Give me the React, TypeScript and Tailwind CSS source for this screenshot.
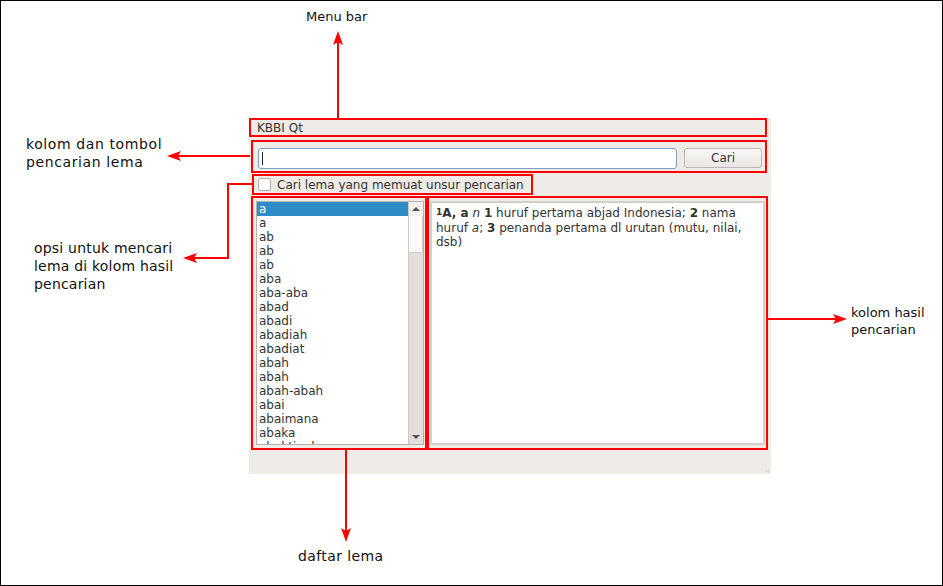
import React from "react"

const lemas = [
  "a",
  "a",
  "ab",
  "ab",
  "ab",
  "aba",
  "aba-aba",
  "abad",
  "abadi",
  "abadiah",
  "abadiat",
  "abah",
  "abah",
  "abah-abah",
  "abai",
  "abaimana",
  "abaka",
  "abaktinal",
]

const font = { fontFamily: '"DejaVu Sans", "Noto Sans", sans-serif' }

function Arrows() {
  return (
    <svg className="absolute inset-0 pointer-events-none" width="943" height="586">
      <g stroke="#ff0000" strokeWidth="2" fill="none">
        <line x1="337" y1="117" x2="337" y2="40" />
        <line x1="249" y1="155" x2="176" y2="155" />
        <polyline points="251,183 227,183 227,257 192,257" />
        <line x1="767" y1="318" x2="836" y2="318" />
        <line x1="345" y1="449" x2="345" y2="530" />
      </g>
      <g fill="#ff0000">
        <polygon points="337,30 332,44 337,41 342,44" />
        <polygon points="166,155 180,150 177,155 180,160" />
        <polygon points="182,257 196,252 193,257 196,262" />
        <polygon points="846,318 832,313 835,318 832,323" />
        <polygon points="345,541 340,527 345,530 350,527" />
      </g>
    </svg>
  )
}

function LemaList() {
  return (
    <div className="ml-[3px] mt-[3px] w-[168px] h-[244px] border border-[#b4b0ac] bg-white flex overflow-hidden">
      <div className="flex-1 flex flex-col overflow-hidden text-[12px] leading-[14px] text-[#333]">
        {lemas.map((l, i) => (
          <div
            key={i}
            className={i === 0 ? "pl-[2px] h-[14px] shrink-0 bg-[#308cc6] text-white" : "pl-[2px] h-[14px] shrink-0"}
          >
            {l}
          </div>
        ))}
      </div>
      <div className="w-[15px] bg-[#e2dedb] border-l border-[#cdc9c5] flex flex-col">
        <div className="h-[14px] flex items-center justify-center bg-[#f2f0ee]">
          <div className="w-0 h-0 border-l-[4px] border-r-[4px] border-b-[4px] border-l-transparent border-r-transparent border-b-[#555]" />
        </div>
        <div className="h-[37px] bg-[#fbfaf9] border-b border-r border-[#d0ccc8]" />
        <div className="flex-1" />
        <div className="h-[14px] flex items-center justify-center">
          <div className="w-0 h-0 border-l-[4px] border-r-[4px] border-t-[4px] border-l-transparent border-r-transparent border-t-[#555]" />
        </div>
      </div>
    </div>
  )
}

function KbbiWindow() {
  return (
    <div
      className="absolute left-[248px] top-[117px] w-[522px] h-[356px] bg-[#efebe7] flex flex-col text-[#333]"
      style={font}
    >
      {/* menu bar */}
      <div className="w-[518px] h-[19px] border-2 border-[#ff0000] flex items-center pl-[6px] text-[12px]">
        KBBI Qt
      </div>

      {/* search */}
      <div className="mt-[3px] ml-[2px] w-[516px] h-[33px] border-2 border-[#ff0000] flex items-start pl-[5px] pt-[6px] gap-[7px]">
        <div className="w-[419px] h-[21px] bg-white border border-[#7a9ec4] rounded-[3px] flex items-center pl-[3px]">
          <div className="w-px h-[13px] bg-[#222]" />
        </div>
        <div className="w-[78px] h-[20px] rounded-[3px] border border-[#bcb8b4] bg-gradient-to-b from-[#f8f7f6] to-[#e9e6e3] flex items-center justify-center text-[12px]">
          Cari
        </div>
      </div>

      {/* option */}
      <div className="mt-px ml-[3px] w-[281px] h-[21px] border-2 border-[#ff0000] flex items-center pl-[4px] gap-[6px] text-[12px]">
        <div className="w-[13px] h-[13px] bg-white border border-[#b0aca8] rounded-[2px]" />
        <span>Cari lema yang memuat unsur pencarian</span>
      </div>

      {/* list + result */}
      <div className="mt-px ml-[2px] flex">
        <div className="w-[176px] h-[254px] border-2 border-[#ff0000]">
          <LemaList />
        </div>
        <div className="w-[341px] h-[254px] border-2 border-[#ff0000]">
          <div className="ml-px mt-[3px] w-[335px] h-[244px] bg-white border-2 border-[#d2cec9] px-[4px] pt-[3px] text-[12px] leading-[14px] text-[#333]">
            <span className="text-[9px] font-bold relative -top-[2px]">1</span>
            <b>A, a</b> <i>n</i> <b>1</b> huruf pertama abjad Indonesia; <b>2</b> nama
            <br />
            huruf <i>a</i>; <b>3</b> penanda pertama dl urutan (mutu, nilai,
            <br />
            dsb)
          </div>
        </div>
      </div>

      <div className="flex-1 flex items-end justify-end pr-[2px] pb-[2px]">
        <div className="grid grid-cols-2 gap-px">
          <div />
          <div className="w-px h-px bg-[#c8c4c0]" />
          <div className="w-px h-px bg-[#c8c4c0]" />
          <div className="w-px h-px bg-[#c8c4c0]" />
        </div>
      </div>
    </div>
  )
}

export default function App() {
  return (
    <div className="relative w-[943px] h-[586px] bg-white border border-black overflow-hidden text-[#111]" style={font}>
      <div className="absolute left-[305px] top-[8px] text-[13px] leading-[16px]">Menu bar</div>
      <div className="absolute left-[25px] top-[134px] text-[14px] leading-[18px] tracking-[0.6px]">
        kolom dan tombol
        <br />
        pencarian lema
      </div>
      <div className="absolute left-[33px] top-[238px] text-[14px] leading-[18px] tracking-[0.2px]">
        opsi untuk mencari
        <br />
        lema di kolom hasil
        <br />
        pencarian
      </div>
      <div className="absolute left-[850px] top-[303px] text-[13px] leading-[17px]">
        kolom hasil
        <br />
        pencarian
      </div>
      <div className="absolute left-[297px] top-[546px] text-[14px] leading-[18px] tracking-[0.4px]">daftar lema</div>

      <KbbiWindow />
      <Arrows />
    </div>
  )
}
